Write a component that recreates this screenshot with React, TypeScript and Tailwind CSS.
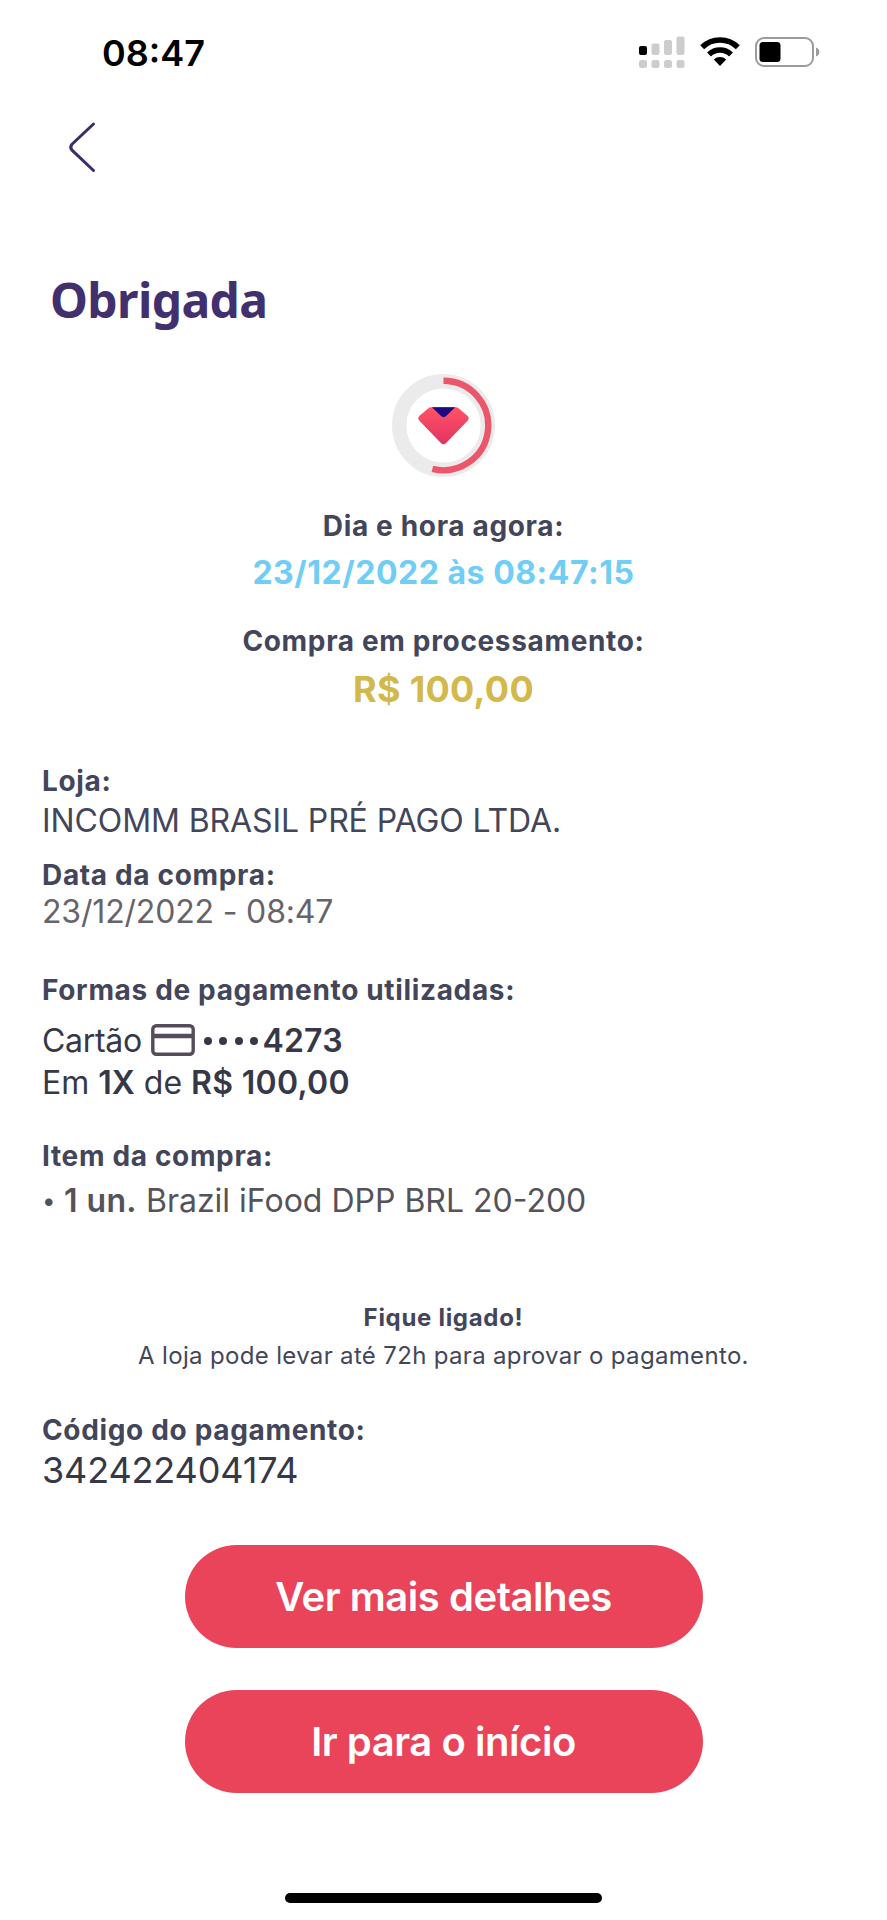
import { ReactNode } from 'react'

function StatusBar() {
  return (
    <div className="flex items-center justify-between h-[104px] pl-[102px] pr-[66px]">
      <span className="pt-[2px] text-[36px] leading-9 font-semibold text-black">08:47</span>
      <div className="flex items-center">
        <svg className="w-[46px] h-8" viewBox="0 0 46 32">
          <rect x="0" y="10" width="8" height="9" rx="2" fill="#000" />
          <rect x="12.5" y="7.5" width="8" height="11.5" rx="2" fill="#cdcdcd" />
          <rect x="25" y="4" width="8" height="15" rx="2" fill="#cdcdcd" />
          <rect x="37.5" y="0.5" width="8" height="18.5" rx="2" fill="#cdcdcd" />
          {[0, 12.5, 25, 37.5].map((x) => (
            <rect key={x} x={x} y="24" width="8" height="8" rx="2.5" fill="#cdcdcd" />
          ))}
        </svg>
        <svg className="ml-[15px] w-10 h-[30px]" viewBox="0 0 40 30">
          <path d="M2.2 10.2A25.5 25.5 0 0 1 37.8 10.2" fill="none" stroke="#000" strokeWidth="5.6" />
          <path d="M9 17.4A15.8 15.8 0 0 1 31 17.4" fill="none" stroke="#000" strokeWidth="5.6" />
          <path d="M20 29L13.8 22.6A9 9 0 0 1 26.2 22.6Z" fill="#000" />
        </svg>
        <svg className="ml-[15px] w-[66px] h-[30px]" viewBox="0 0 66 30">
          <rect x="1" y="1" width="57" height="28" rx="8" fill="none" stroke="#9b9b9b" strokeWidth="2" />
          <rect x="4.5" y="5" width="21" height="20" rx="3.5" fill="#000" />
          <path d="M61 10.5C65.5 12 65.5 18 61 19.5Z" fill="#9b9b9b" />
        </svg>
      </div>
    </div>
  )
}

function ProcessingRing() {
  return (
    <svg className="mx-auto w-[103px] h-[103px]" viewBox="0 0 103 103">
      <defs>
        <linearGradient id="gem" x1="0" y1="0" x2="0" y2="1">
          <stop offset="0" stopColor="#ff5468" />
          <stop offset="1" stopColor="#e23260" />
        </linearGradient>
      </defs>
      <circle cx="51.5" cy="51.5" r="44.3" fill="none" stroke="#ecebec" strokeWidth="14.4" />
      <path d="M51.5 6.8A44.7 44.7 0 1 1 40.4 94.8" fill="none" stroke="#ec566b" strokeWidth="6.4" />
      <path
        d="M39.5 33.3H63.5Q65.5 33.3 67.2 34.7L75.4 41.8Q78 44.3 75.4 46.9L54.1 69Q51.5 71.6 48.9 69L27.6 46.9Q25 44.3 27.6 41.8L35.8 34.7Q37.5 33.3 39.5 33.3Z"
        fill="url(#gem)"
      />
      <path d="M40 33.3H63.2L54.4 41.8Q51.6 44.6 48.8 41.8Z" fill="#1d0782" />
    </svg>
  )
}

function Label({ className = '', children }: { className?: string; children: ReactNode }) {
  return (
    <p className={`text-[28px] leading-9 font-bold tracking-[0.66px] text-[#43465a] ${className}`}>{children}</p>
  )
}

function PillButton({ children }: { children: ReactNode }) {
  return (
    <button className="w-[518px] h-[103px] rounded-full bg-[#ea445a] text-white text-[40px] leading-10 font-semibold tracking-[-0.45px]">
      {children}
    </button>
  )
}

export default function App() {
  return (
    <div className="w-full min-h-[1920px] bg-white font-['Inter','Liberation_Sans',sans-serif] whitespace-nowrap overflow-hidden">
      <StatusBar />

      <header>
        <button className="block mt-[17px] ml-[66px]">
          <svg className="w-8 h-[54px]" viewBox="0 0 32 54" fill="none" stroke="#3b2c6b" strokeWidth="3" strokeLinecap="round">
            <path d="M27.5 3L6 23.2Q3.4 26.2 6 29.2L27.5 49.5" />
          </svg>
        </button>
        <h1 className="mt-[95px] ml-[50px] text-[48px] leading-[60px] font-bold tracking-[-0.6px] text-[#412f6e] font-['Noto_Sans','Open_Sans',sans-serif]">
          Obrigada
        </h1>
      </header>

      <main className="mt-11">
        <ProcessingRing />

        <section className="text-center">
          <Label className="mt-[31px]">Dia e hora agora:</Label>
          <p className="mt-[11px] text-[32px] leading-9 font-bold tracking-[0.53px] text-[#6fcdf6]">
            23/12/2022 às 08:47:15
          </p>
          <Label className="mt-8">Compra em processamento:</Label>
          <p className="mt-3 text-[36px] leading-9 font-bold tracking-[0.3px] text-[#d3b84c]">R$ 100,00</p>
        </section>

        <section className="mt-14 pl-[42px]">
          <Label>Loja:</Label>
          <p className="mt-1 text-[32px] leading-9 tracking-[-0.1px] text-[#43465a]">INCOMM BRASIL PRÉ PAGO LTDA.</p>
          <Label className="mt-[18px]">Data da compra:</Label>
          <p className="mt-px text-[32px] leading-9 tracking-[-0.17px] text-[#66636b]">23/12/2022 - 08:47</p>

          <Label className="mt-[42px]">Formas de pagamento utilizadas:</Label>
          <div className="mt-[15px] flex items-center text-[32px] leading-9 text-[#363848]">
            <span className="tracking-[-0.3px]">Cartão</span>
            <svg className="ml-[9px] mb-[2px] w-11 h-8" viewBox="0 0 44 32">
              <rect x="1.8" y="1.8" width="40.4" height="28.4" rx="3.5" fill="none" stroke="#554c5a" strokeWidth="3.4" />
              <path d="M2 12H42" stroke="#554c5a" strokeWidth="4.6" />
            </svg>
            <span className="ml-[9px] flex items-center gap-[7.5px]">
              {[0, 1, 2, 3].map((i) => (
                <span key={i} className="size-2 rounded-full bg-[#363848]" />
              ))}
            </span>
            <span className="ml-1 font-semibold tracking-[0.2px]">4273</span>
          </div>
          <p className="mt-[6px] text-[32px] leading-9 text-[#363848]">
            Em <span className="font-semibold">1X</span> de{' '}
            <span className="font-semibold tracking-[0.3px]">R$ 100,00</span>
          </p>

          <Label className="mt-[37px]">Item da compra:</Label>
          <p className="mt-[9px] flex items-center text-[32px] leading-9 text-[#55525a]">
            <span className="w-[22px] text-[24px]">•</span>
            <span className="font-semibold tracking-[0.4px]">1 un.</span>
            <span className="ml-[9px]">Brazil iFood DPP BRL 20-200</span>
          </p>
        </section>

        <section className="mt-[81px] text-center text-[24px] leading-9 text-[#43465a]">
          <p className="font-bold tracking-[0.7px]">Fique ligado!</p>
          <p className="mt-[2px] tracking-[0.33px]">A loja pode levar até 72h para aprovar o pagamento.</p>
        </section>

        <section className="mt-[38px] pl-[42px]">
          <Label>Código do pagamento:</Label>
          <p className="mt-1 text-[36px] leading-9 tracking-[-0.15px] text-[#363848]">342422404174</p>
        </section>

        <div className="mt-[57px] flex flex-col items-center gap-[42px]">
          <PillButton>Ver mais detalhes</PillButton>
          <PillButton>Ir para o início</PillButton>
        </div>
      </main>

      <div className="mt-[100px] mx-auto w-[317px] h-[10px] rounded-full bg-black" />
    </div>
  )
}
